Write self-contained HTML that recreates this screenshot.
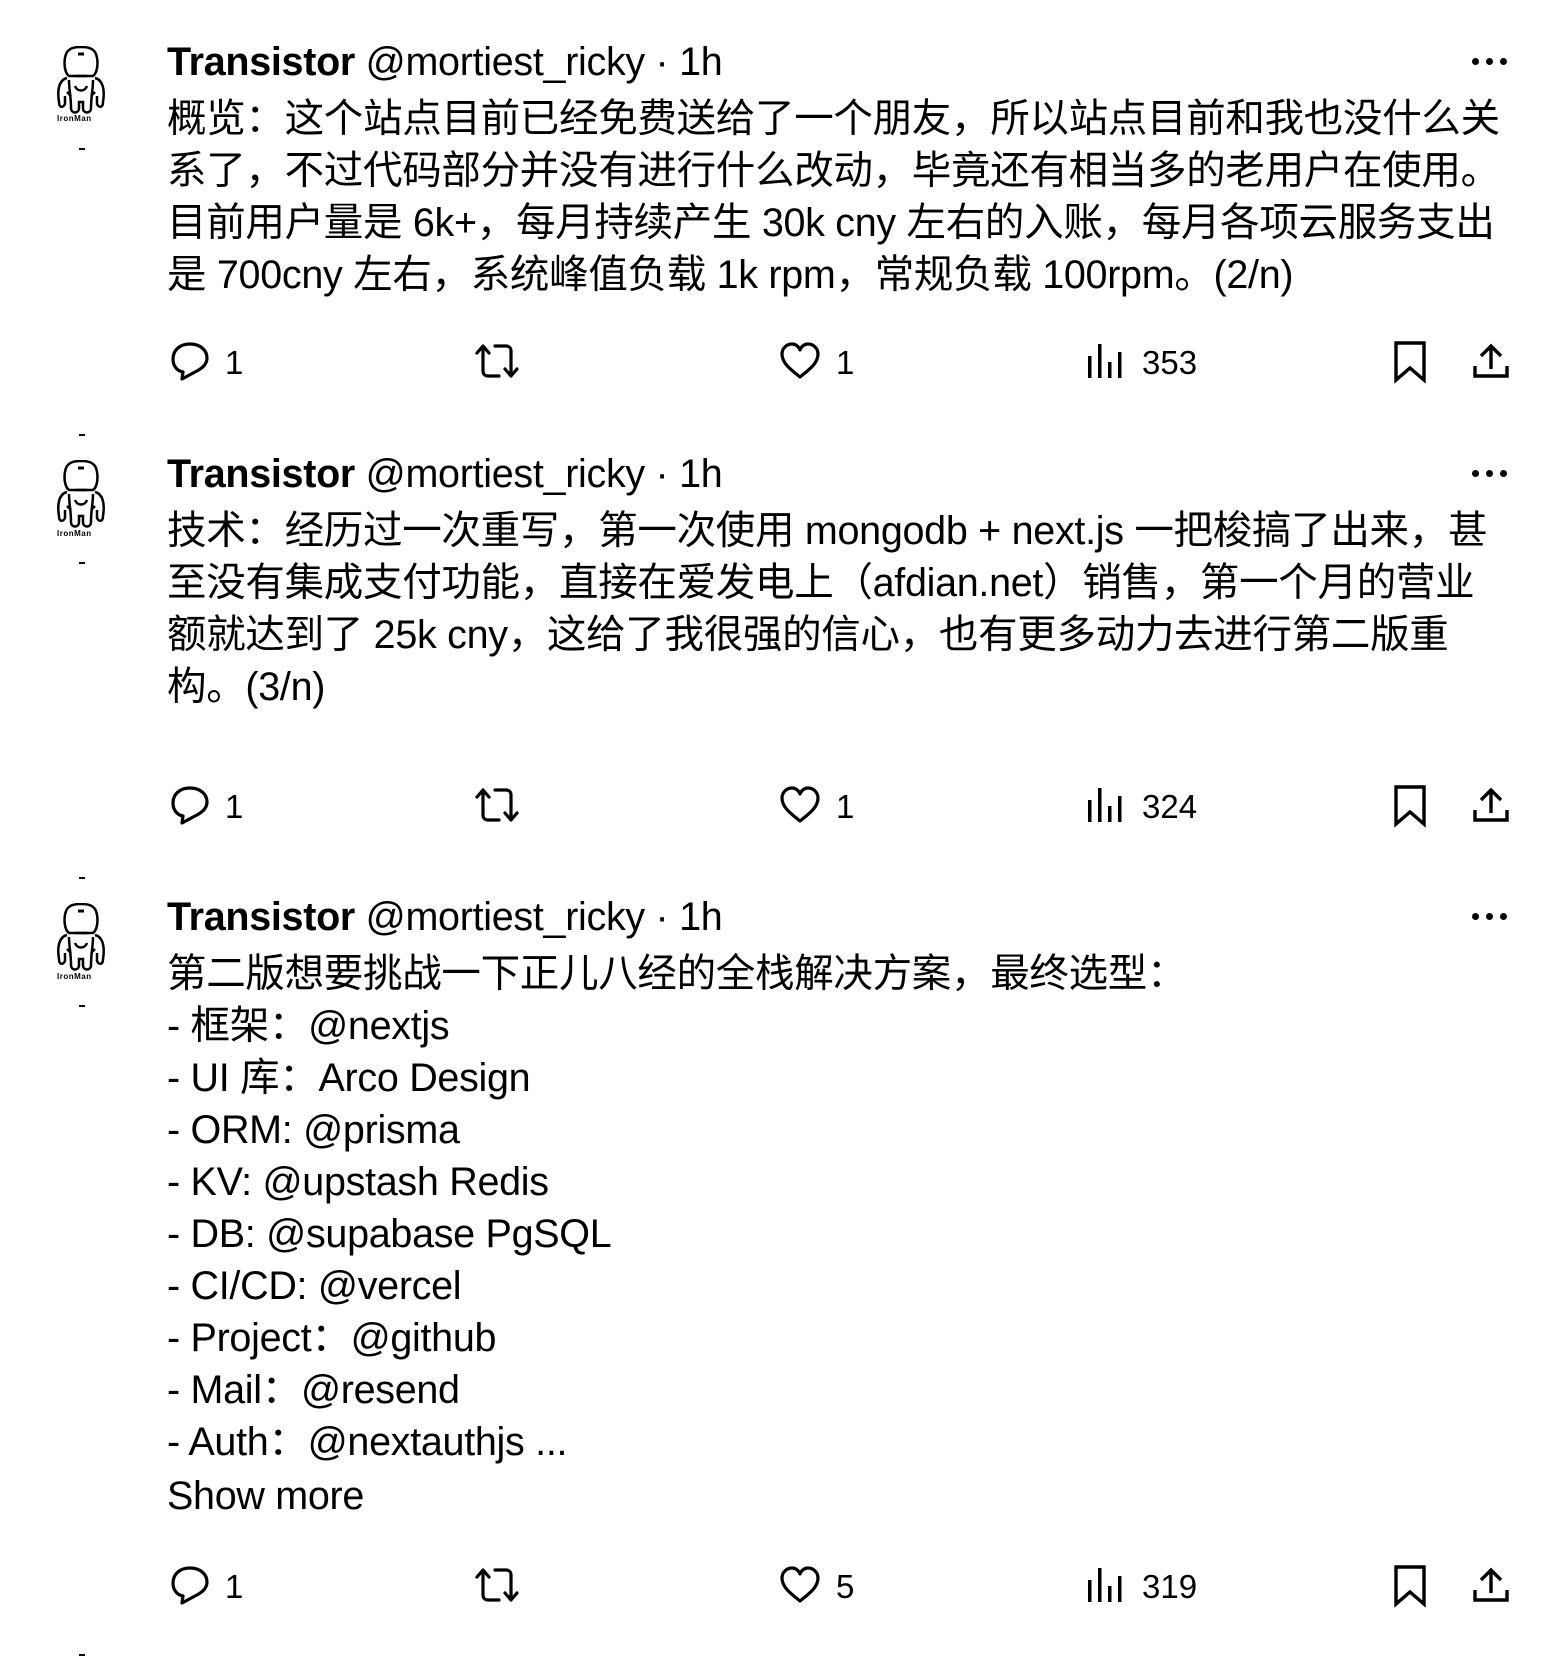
<!DOCTYPE html>
<html><head><meta charset="utf-8"><style>
html,body{margin:0;padding:0;background:#fff;}
body{width:1542px;height:1668px;position:relative;overflow:hidden;font-family:"Liberation Sans","Noto Sans CJK SC",sans-serif;color:#000;}
.l{position:absolute;left:167px;height:52px;line-height:52px;font-size:39.5px;white-space:nowrap;letter-spacing:-0.3px;}
.n b{font-weight:bold;}
.ic{position:absolute;}
.c{position:absolute;font-size:33px;line-height:40px;height:40px;}
.dash{position:absolute;left:79px;width:6px;height:2px;background:#000;}
.dots{position:absolute;left:1472px;width:36px;height:8px;}
.dots i{position:absolute;top:0;width:7px;height:7px;border-radius:50%;background:#000;}
.im{position:absolute;left:57px;font-size:8px;font-weight:bold;letter-spacing:0.5px}
</style></head><body>

<svg width="0" height="0" style="position:absolute">
<defs>
<g id="av" fill="none" stroke="#000" stroke-width="2.5">
<path d="M14 30 C8 26 8 8 14 4 C18 0 34 0 38 4 C44 8 44 26 38 30 Z"/>
<path d="M23 8 h6" stroke-width="3"/>
<path d="M20 30 h12"/>
<path d="M12 32 C4 34 2 44 4 56 C4 62 8 62 10 58 L10 50 M40 32 C48 34 50 44 48 56 C48 62 44 62 42 58 L42 50"/>
<path d="M14 34 C14 44 16 50 16 62 C16 68 24 68 24 62 L24 56 L28 56 L28 62 C28 68 36 68 36 62 C36 50 38 44 38 34"/>
<path d="M20 40 C22 46 30 46 32 40"/>
<path d="M12 46 L16 50 M40 46 L36 50"/>
</g>
</defs>
</svg>

<!-- Tweet 1 -->
<svg class="ic" style="left:55px;top:46px" width="54" height="74"><use href="#av"/></svg>
<div class="im" style="top:114px">IronMan</div>
<div class="dash" style="top:148px"></div>

<div class="l n" style="top:36px"><b>Transistor</b> @mortiest_ricky · 1h</div>
<div class="dots" style="top:58px"><i style="left:0"></i><i style="left:14px"></i><i style="left:28px"></i></div>
<div class="l" style="top:93px">概览：这个站点目前已经免费送给了一个朋友，所以站点目前和我也没什么关</div>
<div class="l" style="top:145px">系了，不过代码部分并没有进行什么改动，毕竟还有相当多的老用户在使用。</div>
<div class="l" style="top:197px">目前用户量是 6k+，每月持续产生 30k cny 左右的入账，每月各项云服务支出</div>
<div class="l" style="top:249px">是 700cny 左右，系统峰值负载 1k rpm，常规负载 100rpm。(2/n)</div>

<!-- Tweet 2 -->
<div class="dash" style="top:434px"></div>
<svg class="ic" style="left:55px;top:460px" width="54" height="74"><use href="#av"/></svg>
<div class="im" style="top:529px">IronMan</div>
<div class="dash" style="top:562px"></div>

<div class="l n" style="top:448px"><b>Transistor</b> @mortiest_ricky · 1h</div>
<div class="dots" style="top:470px"><i style="left:0"></i><i style="left:14px"></i><i style="left:28px"></i></div>
<div class="l" style="top:505px">技术：经历过一次重写，第一次使用 mongodb + next.js 一把梭搞了出来，甚</div>
<div class="l" style="top:557px">至没有集成支付功能，直接在爱发电上（afdian.net）销售，第一个月的营业</div>
<div class="l" style="top:609px">额就达到了 25k cny，这给了我很强的信心，也有更多动力去进行第二版重</div>
<div class="l" style="top:661px">构。(3/n)</div>

<!-- Tweet 3 -->
<div class="dash" style="top:877px"></div>
<svg class="ic" style="left:55px;top:903px" width="54" height="74"><use href="#av"/></svg>
<div class="im" style="top:972px">IronMan</div>
<div class="dash" style="top:1005px"></div>

<div class="l n" style="top:891px"><b>Transistor</b> @mortiest_ricky · 1h</div>
<div class="dots" style="top:913px"><i style="left:0"></i><i style="left:14px"></i><i style="left:28px"></i></div>
<div class="l" style="top:948px">第二版想要挑战一下正儿八经的全栈解决方案，最终选型：</div>
<div class="l" style="top:1000px">- 框架：@nextjs</div>
<div class="l" style="top:1052px">- UI 库：Arco Design</div>
<div class="l" style="top:1104px">- ORM: @prisma</div>
<div class="l" style="top:1156px">- KV: @upstash Redis</div>
<div class="l" style="top:1208px">- DB: @supabase PgSQL</div>
<div class="l" style="top:1260px">- CI/CD: @vercel</div>
<div class="l" style="top:1312px">- Project：@github</div>
<div class="l" style="top:1364px">- Mail：@resend</div>
<div class="l" style="top:1416px">- Auth：@nextauthjs ...</div>
<div class="l" style="top:1470px">Show more</div>
<div class="dash" style="top:1654px"></div>

<svg width="0" height="0" style="position:absolute"><defs>
<g id="reply" fill="none" stroke="#000" stroke-width="3.2" stroke-linejoin="round"><path d="M20 3 C30 3 37 9 37 17 C37 24 31 28 25 31 L12 38 L13 31 C7 30 3 25 3 18 C3 9 10 3 20 3 Z"/></g>
<g id="rt" fill="none" stroke="#000" stroke-width="3.2" stroke-linejoin="round" stroke-linecap="round"><path d="M4 12 L10 5 L16 12 M10 6 V30 C10 33 12 35 15 35 H26"/><path d="M44 28 L38 35 L32 28 M38 34 V10 C38 7 36 5 33 5 H22"/></g>
<g id="heart" fill="none" stroke="#000" stroke-width="3.2" stroke-linejoin="round"><path d="M20 35 C10 27 2 21 2 12 C2 6 7 2 12 2 C16 2 19 5 20 8 C21 5 24 2 28 2 C33 2 38 6 38 12 C38 21 30 27 20 35 Z"/></g>
<g id="views" fill="#000"><rect x="0" y="14" width="3.5" height="22"/><rect x="10" y="2" width="3.5" height="34"/><rect x="20" y="20" width="3.5" height="16"/><rect x="30" y="10" width="3.5" height="26"/></g>
<g id="bm" fill="none" stroke="#000" stroke-width="3.4" stroke-linejoin="miter"><path d="M3 3 H31 V40 L17 28 L3 40 Z"/></g>
<g id="share" fill="none" stroke="#000" stroke-width="3.4" stroke-linejoin="miter"><path d="M19 4 V27 M9 14 L19 4 L29 14"/><path d="M3 24 V34 H35 V24"/></g>
</defs></svg>

<!-- row 1 -->
<svg class="ic" style="left:170px;top:341px" width="42" height="42"><use href="#reply"/></svg>
<div class="c" style="left:225px;top:343px">1</div>
<svg class="ic" style="left:473px;top:341px" width="48" height="40"><use href="#rt"/></svg>
<svg class="ic" style="left:780px;top:342px" width="42" height="40"><use href="#heart"/></svg>
<div class="c" style="left:836px;top:343px">1</div>
<svg class="ic" style="left:1088px;top:342px" width="36" height="38"><use href="#views"/></svg>
<div class="c" style="left:1142px;top:343px">353</div>
<svg class="ic" style="left:1393px;top:340px" width="36" height="44"><use href="#bm"/></svg>
<svg class="ic" style="left:1472px;top:342px" width="40" height="38"><use href="#share"/></svg>

<!-- row 2 -->
<svg class="ic" style="left:170px;top:785px" width="42" height="42"><use href="#reply"/></svg>
<div class="c" style="left:225px;top:787px">1</div>
<svg class="ic" style="left:473px;top:785px" width="48" height="40"><use href="#rt"/></svg>
<svg class="ic" style="left:780px;top:786px" width="42" height="40"><use href="#heart"/></svg>
<div class="c" style="left:836px;top:787px">1</div>
<svg class="ic" style="left:1088px;top:786px" width="36" height="38"><use href="#views"/></svg>
<div class="c" style="left:1142px;top:787px">324</div>
<svg class="ic" style="left:1393px;top:784px" width="36" height="44"><use href="#bm"/></svg>
<svg class="ic" style="left:1472px;top:786px" width="40" height="38"><use href="#share"/></svg>

<!-- row 3 -->
<svg class="ic" style="left:170px;top:1565px" width="42" height="42"><use href="#reply"/></svg>
<div class="c" style="left:225px;top:1567px">1</div>
<svg class="ic" style="left:473px;top:1565px" width="48" height="40"><use href="#rt"/></svg>
<svg class="ic" style="left:780px;top:1566px" width="42" height="40"><use href="#heart"/></svg>
<div class="c" style="left:836px;top:1567px">5</div>
<svg class="ic" style="left:1088px;top:1566px" width="36" height="38"><use href="#views"/></svg>
<div class="c" style="left:1142px;top:1567px">319</div>
<svg class="ic" style="left:1393px;top:1564px" width="36" height="44"><use href="#bm"/></svg>
<svg class="ic" style="left:1472px;top:1566px" width="40" height="38"><use href="#share"/></svg>

</body></html>
